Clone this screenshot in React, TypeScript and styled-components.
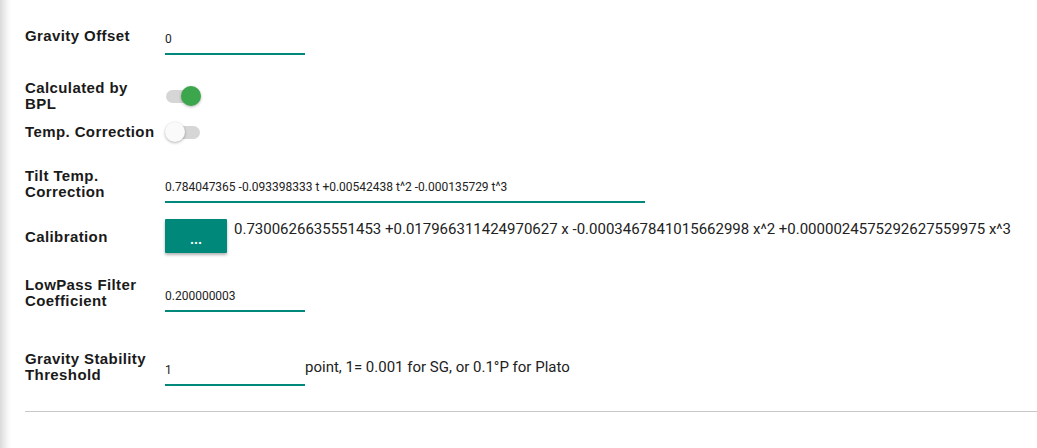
import React from "react";
import styled, { createGlobalStyle } from "styled-components";

const Global = createGlobalStyle`
  html, body { margin: 0; padding: 0; background: #fff; }
  body { font-family: Roboto, "Liberation Sans", Arial, sans-serif; color: #222; }
`;

const Page = styled.div`
  display: flex;
  width: 1037px;
  height: 448px;
  overflow: hidden;
`;

const Shade = styled.div`
  width: 11px;
  flex: none;
  background: linear-gradient(to right, #dadada, #f3f3f3 60%, #fff);
`;

const Content = styled.div`
  flex: 1;
  display: flex;
  flex-direction: column;
  padding-left: 14px;
  padding-top: 14px;
`;

const Row = styled.div<{ $mt: number; $h: number; $top?: boolean }>`
  display: flex;
  align-items: ${(p) => (p.$top ? "flex-start" : "center")};
  margin-top: ${(p) => p.$mt}px;
  height: ${(p) => p.$h}px;
`;

const Label = styled.div`
  width: 140px;
  flex: none;
  font-family: "Liberation Sans", Arial, sans-serif;
  font-weight: 700;
  font-size: 15px;
  letter-spacing: 0.4px;
  line-height: 16px;
  color: #1a1a1a;
  padding-right: 8px;
  box-sizing: border-box;
  align-self: center;
`;

const Field = styled.input<{ $w: number }>`
  box-sizing: border-box;
  width: ${(p) => p.$w}px;
  height: 38px;
  padding: 15px 0 7px 0;
  line-height: 14px;
  font-size: 12px;
  font-family: Roboto, "Liberation Sans", Arial, sans-serif;
  color: #222;
  border: none;
  border-bottom: 2px solid #00897b;
  outline: none;
  background: transparent;
`;

const Note = styled.span`
  font-size: 15px;
  color: #222;
  line-height: 20px;
`;

const Track = styled.div`
  position: relative;
  width: 34px;
  height: 13px;
  border-radius: 7px;
  background: #d6d6d6;
  margin-left: 1px;
`;

const Thumb = styled.div<{ $on: boolean }>`
  position: absolute;
  top: -4px;
  left: ${(p) => (p.$on ? "15px" : "-1px")};
  width: 20px;
  height: 20px;
  border-radius: 50%;
  background: ${(p) => (p.$on ? "#3ba64c" : "#fafafa")};
  box-shadow: 0 1px 3px rgba(0, 0, 0, 0.3);
`;

const Switch = ({ on }: { on: boolean }) => (
  <Track>
    <Thumb $on={on} />
  </Track>
);

const DotButton = styled.button`
  width: 62px;
  height: 34px;
  flex: none;
  border: none;
  border-radius: 1px;
  background: #00897b;
  color: #fff;
  font-family: Roboto, "Liberation Sans", Arial, sans-serif;
  font-weight: 700;
  font-size: 14px;
  padding-top: 6px;
  box-shadow: 0 2px 3px rgba(0, 0, 0, 0.3);
  cursor: pointer;
`;

const CalText = styled.span`
  margin-left: 7px;
  font-size: 15px;
  line-height: 20px;
  color: #222;
  white-space: nowrap;
`;

const Rule = styled.hr`
  margin: 24px 0 0 0;
  border: none;
  border-top: 1px solid #c8c8c8;
  height: 0;
`;

export default function App() {
  return (
    <>
      <Global />
      <Page>
        <Shade />
        <Content>
          <Row $mt={0} $h={44}>
            <Label>Gravity Offset</Label>
            <Field $w={140} defaultValue="0" />
          </Row>
          <Row $mt={18} $h={40}>
            <Label>Calculated by BPL</Label>
            <Switch on={true} />
          </Row>
          <Row $mt={4} $h={24}>
            <Label>Temp. Correction</Label>
            <Switch on={false} />
          </Row>
          <Row $mt={20} $h={40}>
            <Label>Tilt Temp. Correction</Label>
            <Field
              $w={480}
              defaultValue="0.784047365 -0.093398333 t +0.00542438 t^2 -0.000135729 t^3"
            />
          </Row>
          <Row $mt={15} $h={36} $top>
            <Label>Calibration</Label>
            <DotButton>...</DotButton>
            <CalText>
              0.7300626635551453 +0.017966311424970627 x -0.0003467841015662998 x^2
              +0.0000024575292627559975 x^3
            </CalText>
          </Row>
          <Row $mt={18} $h={40}>
            <Label>LowPass Filter Coefficient</Label>
            <Field $w={140} defaultValue="0.200000003" />
          </Row>
          <Row $mt={34} $h={40}>
            <Label>Gravity Stability Threshold</Label>
            <Field $w={140} defaultValue="1" />
            <Note>point, 1= 0.001 for SG, or 0.1°P for Plato</Note>
          </Row>
          <Rule />
        </Content>
      </Page>
    </>
  );
}
